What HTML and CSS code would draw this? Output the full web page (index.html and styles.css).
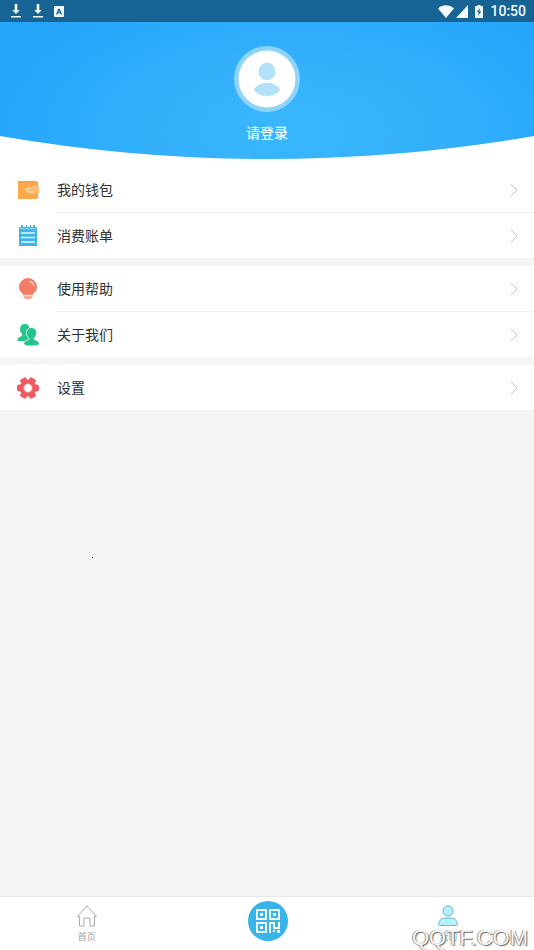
FILE: index.html
```html
<!DOCTYPE html>
<html lang="zh-CN">
<head>
<meta charset="utf-8">
<meta name="viewport" content="width=device-width, initial-scale=1">
<title>我的</title>
<link rel="stylesheet" href="styles.css">
</head>
<body>
<div class="app">
  <div class="status">
    <div class="status-left">
      <svg width="12" height="14" viewBox="0 0 12 14"><path d="M4.7 0h2.6v6h2.5L6 10 2.2 6h2.5zM1 12h10v1.5H1z"/></svg>
      <svg width="12" height="14" viewBox="0 0 12 14"><path d="M4.7 0h2.6v6h2.5L6 10 2.2 6h2.5zM1 12h10v1.5H1z"/></svg>
      <svg width="10" height="11" viewBox="0 0 10 11"><path fill-rule="evenodd" d="M1 0h8a1 1 0 0 1 1 1v9a1 1 0 0 1-1 1H1a1 1 0 0 1-1-1V1a1 1 0 0 1 1-1zM4.2 2.7 2 8.5h1.5l.4-1.2h2.2l.4 1.2H8L5.8 2.7zM5 4.2l.7 2H4.3z"/></svg>
    </div>
    <div class="status-right">
      <svg width="16" height="13" viewBox="0 0 16 13"><path d="M0 3.500C4.500-.7 11.500-.7 16 3.500L8 13z"/></svg>
      <svg width="12" height="13" viewBox="0 0 12 13"><path d="M12 0v13H0z"/></svg>
      <svg class="battery" width="8" height="13" viewBox="0 0 8 13"><path fill-rule="evenodd" d="M2.500 0h3v1H7a1 1 0 0 1 1 1v10a1 1 0 0 1-1 1H1a1 1 0 0 1-1-1V2a1 1 0 0 1 1-1h1.500zM5 3 1.700 7.300h2L3 11l3.400-4.600h-2z"/></svg>
      <time>10:50</time>
    </div>
  </div>

  <header class="profile">
    <svg class="curve" viewBox="0 0 534 24" preserveAspectRatio="none"><path d="M0 0Q267 46 534 0V24H0z"/></svg>
    <a class="login" href="#login">
      <svg class="avatar" width="66" height="66" viewBox="0 0 66 66">
        <circle cx="33" cy="33" r="33" fill="#8dd3fc"/>
        <circle cx="33" cy="33" r="28.500" fill="#fff"/>
        <ellipse cx="33" cy="25.500" rx="8.500" ry="9" fill="#b3e1f8"/>
        <path d="M19.500 43.500C26 34.500 40 34.500 46.500 43.500C40 52.500 26 52.500 19.500 43.500z" fill="#b3e1f8"/>
      </svg>
      <span>请登录</span>
    </a>
  </header>

  <main class="menu">
    <nav class="group">
      <a class="row" href="#wallet">
        <svg class="icon" viewBox="0 0 22 22"><path fill="#fba94c" d="M1 2h18l2 1v17H1z"/><path fill="#f99f3c" d="M1 2h18v2H1z"/><path fill="#fdbb70" d="M12.500 7.500H22v7h-9.500a3.500 3.500 0 0 1 0-7z"/><path fill="none" stroke="#fee0b8" d="M20 8h-4M14 9.500h-3a2 2 0 0 0 0 3.500h5M9 9v3"/></svg>
        <span class="label">我的钱包</span>
        <svg class="arrow" viewBox="0 0 8 14"><path d="M1 1l6 6-6 6"/></svg>
      </a>
      <a class="row" href="#bills">
        <svg class="icon" viewBox="0 0 22 22"><path fill="#3db5ea" d="M2 2h2V0h2v2h3V0h1v2h3V0h1v2h2V0h2v2h2v19H2z"/><path fill="none" stroke="#a5e0f8" d="M3 3.500h3l1 1 1-1h3l1 1 1-1h3l1 1 1-1h1"/><path stroke="#e4f7ff" stroke-width="1.500" d="M4 8h14M4 12.500h14M4 17h14"/></svg>
        <span class="label">消费账单</span>
        <svg class="arrow" viewBox="0 0 8 14"><path d="M1 1l6 6-6 6"/></svg>
      </a>
    </nav>
    <nav class="group">
      <a class="row" href="#help">
        <svg class="icon" viewBox="0 0 22 22"><path fill="#f47c64" d="M11 0a9 9 0 0 1 9 9c0 4-3 5.500-4.500 8h-9C5 14.500 2 13 2 9a9 9 0 0 1 9-9z"/><path fill="#f9a18f" d="M6.500 17h9v2l-2 2h-5l-2-2z"/><path fill="none" stroke="#ffd9d0" stroke-width="1.300" stroke-linecap="round" d="M12.500 3.500c2.500.5 4 2 4.500 4.500M7 17.500h8"/></svg>
        <span class="label">使用帮助</span>
        <svg class="arrow" viewBox="0 0 8 14"><path d="M1 1l6 6-6 6"/></svg>
      </a>
      <a class="row" href="#about">
        <svg class="icon" viewBox="0 0 22 22"><path fill="#25c48b" d="M8 0c3 0 4.500 2 4.500 5 0 2.500-1 4-2 5v2c1 1 2 1 2 3l-2 2H.5c0-3 1-3.500 4.500-5v-2C3.500 8.500 3 7 3 5c0-3 2-5 5-5z"/><path fill="#25c48b" stroke="#fff" stroke-width=".8" d="M14.500 3.500c3.200 0 5.200 2.200 5.200 5.300 0 2.500-1.200 4.200-2.500 5.200v1.500c3 1 5 2 5 4 0 1.700-2 2.500-7.700 2.500s-7.700-.8-7.700-2.500c0-2 2-3 5-4V14c-1.500-1-2.500-2.700-2.500-5.200 0-3.100 2-5.300 5.200-5.300z"/></svg>
        <span class="label">关于我们</span>
        <svg class="arrow" viewBox="0 0 8 14"><path d="M1 1l6 6-6 6"/></svg>
      </a>
    </nav>
    <nav class="group">
      <a class="row" href="#settings">
        <svg class="icon" viewBox="0 0 22 22"><g fill="#ef5b62"><circle cx="11" cy="11" r="8.300"/><rect x="0" y="7.500" width="22" height="7" rx="2"/><rect x="0" y="7.500" width="22" height="7" rx="2" transform="rotate(60 11 11)"/><rect x="0" y="7.500" width="22" height="7" rx="2" transform="rotate(120 11 11)"/></g><circle cx="11" cy="11" r="4.200" fill="#fff" stroke="#f79a9e" stroke-width=".8"/></svg>
        <span class="label">设置</span>
        <svg class="arrow" viewBox="0 0 8 14"><path d="M1 1l6 6-6 6"/></svg>
      </a>
    </nav>
  </main>
  <i class="speck"></i>

  <nav class="tabs">
    <a class="tab" href="#home">
      <svg width="22" height="22" viewBox="0 0 22 22"><path fill="none" stroke="#a9a9a9" stroke-linejoin="round" d="M3.500 11.500h-2L11 1l9.500 10.500h-2V21H14v-8H8v8H3.500z"/></svg>
      <span>首页</span>
    </a>
    <a class="scan" href="#scan" aria-label="扫码">
      <svg width="24" height="24" viewBox="0 0 24 24"><path fill="none" stroke="#effaff" stroke-width="2" d="M1 1h9v9H1zM14 1h9v9h-9zM1 14h9v9H1zM14 24V14h4v5h5v-6"/><path fill="#effaff" d="M4 4h3v3H4zM17 4h3v3h-3zM4 17h3v3H4zM17 21h2v2h-2zM21 21h3v3h-3z"/></svg>
    </a>
    <a class="tab active" href="#me">
      <svg width="22" height="22" viewBox="0 0 22 22"><g fill="#b8f0fc" stroke="#55bcd6"><circle cx="11" cy="6" r="5"/><path d="M2.500 20.500c-2 0-.5-7.500 5-7.500h7c5.500 0 7 7.500 5 7.500z"/></g></svg>
      <span>我的</span>
    </a>
    <span class="watermark">QQTF.COM</span>
  </nav>
</div>
</body>
</html>
```
FILE: styles.css
```css
* {
  box-sizing: border-box;
}

body {
  margin: 0;
  background: #f5f5f5;
  color: #303030;
  font-family: "Noto Sans CJK SC", sans-serif;
}

a {
  color: inherit;
  text-decoration: none;
}

svg {
  display: block;
  flex: none;
}

.app {
  position: relative;
  display: flex;
  flex-direction: column;
  min-height: 100vh;
}

.status {
  display: flex;
  align-items: center;
  justify-content: space-between;
  height: 22px;
  padding: 0 8px 0 10px;
  background: #176394;
  color: #f2fbff;
  fill: #f2fbff;
}

.status-left {
  display: flex;
  align-items: center;
  gap: 10px;
}

.status-right {
  display: flex;
  align-items: center;
  gap: 2px;
  font: 500 14px/22px Roboto, sans-serif;
}

.battery {
  margin: 0 5px;
}

.profile {
  position: relative;
  height: 145px;
  padding-top: 24px;
  background:
    linear-gradient(#fff, #fff) bottom / 100% 8px no-repeat,
    radial-gradient(ellipse 60% 110% at 55% 75%, #39b7fc, #34b0fb 45%, #24a5fb);
}

.curve {
  position: absolute;
  left: 0;
  bottom: 7px;
  width: 100%;
  height: 24px;
  fill: #fff;
}

.login {
  position: relative;
  display: flex;
  flex-direction: column;
  align-items: center;
  gap: 10px;
  color: #f0faff;
  font-size: 14px;
  font-weight: 500;
  line-height: 20px;
}

.menu {
  flex: 1;
}

.group {
  margin-bottom: 8px;
  background: #fff;
}

.row {
  position: relative;
  display: flex;
  align-items: center;
  height: 45px;
  padding: 0 16px 0 17px;
}

.row + .row {
  height: 46px;
  border-top: 1px solid transparent;
}

.row + .row::before {
  content: "";
  position: absolute;
  top: -1px;
  left: 56px;
  right: 0;
  height: 1px;
  background: #f0f0f0;
}

.icon {
  width: 22px;
  height: 22px;
}

.label {
  flex: 1;
  margin-left: 18px;
  padding-bottom: 2px;
  font-size: 14px;
  line-height: 20px;
}

.arrow {
  width: 8px;
  height: 14px;
  fill: none;
  stroke: #c8c8c8;
}

.speck {
  position: absolute;
  top: 557px;
  left: 92px;
  width: 1px;
  height: 1px;
  background: #222;
}

.tabs {
  position: relative;
  display: grid;
  grid-template-columns: 1fr 190px 1fr;
  justify-items: center;
  height: 54px;
  padding: 4px 0 0 1px;
  border-top: 1px solid #e9e9e9;
  background: #fff;
}

.tab {
  display: flex;
  flex-direction: column;
  align-items: center;
  gap: 4px;
  padding-top: 4px;
  color: #999;
  font-size: 9px;
  line-height: 12px;
}

.active {
  color: #4fcbe8;
}

.scan {
  display: grid;
  place-items: center;
  width: 40px;
  height: 40px;
  border-radius: 50%;
  background: #38b4e9;
}

.watermark {
  position: absolute;
  right: 6px;
  bottom: 0;
  color: #f4f4f4;
  font: 22px/24px "Liberation Sans", sans-serif;
  text-shadow: -1px 0 0 #999, 1px 1px 1px #666;
}
```
